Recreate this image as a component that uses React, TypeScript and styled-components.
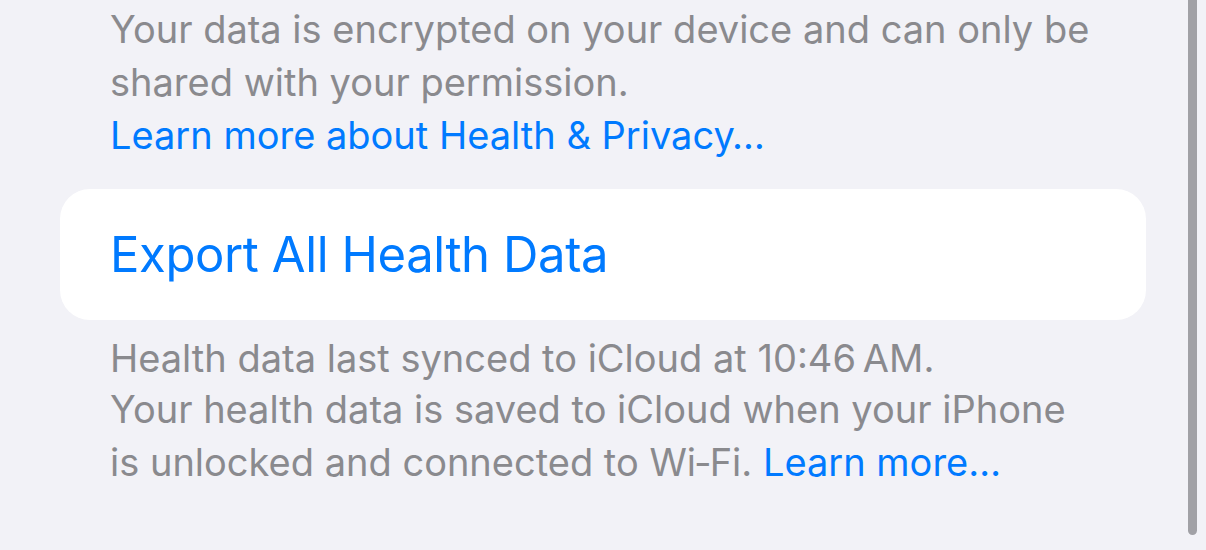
import React from 'react';
import styled, { createGlobalStyle } from 'styled-components';

const COLORS = {
  background: '#f2f2f7',
  card: '#ffffff',
  secondary: '#8a8a8e',
  link: '#007aff',
  scroll: '#a1a1a6',
};

const GlobalStyle = createGlobalStyle`
  html, body {
    margin: 0;
    padding: 0;
    background: ${COLORS.background};
  }
  body {
    font-family: Inter, "Noto Sans", sans-serif;
    -webkit-font-smoothing: antialiased;
  }
`;

const Screen = styled.div`
  position: relative;
  width: 1206px;
  height: 550px;
  overflow: hidden;
  background: ${COLORS.background};
  box-sizing: border-box;
  padding: 3px 60px 0;
`;

const Footer = styled.p<{ $top?: number; $lineHeight?: number }>`
  margin: ${(p) => p.$top ?? 0}px 0 0;
  padding: 0 44px 0 50px;
  font-size: 38px;
  line-height: ${(p) => p.$lineHeight ?? 53}px;
  letter-spacing: 0;
  color: ${COLORS.secondary};
`;

const Link = styled.a`
  color: ${COLORS.link};
  text-decoration: none;
`;

const Card = styled.div`
  margin-top: 27px;
  height: 131px;
  background: ${COLORS.card};
  border-radius: 30px;
  display: flex;
  align-items: center;
  padding: 0 50px;
`;

const CardAction = styled.span`
  font-size: 49px;
  color: ${COLORS.link};
  letter-spacing: -0.4px;
`;

const ScrollThumb = styled.div`
  position: absolute;
  top: -20px;
  right: 9px;
  width: 9px;
  height: 555px;
  border-radius: 5px;
  background: ${COLORS.scroll};
`;

export default function App() {
  return (
    <>
      <GlobalStyle />
      <Screen>
        <Footer>
          Your data is encrypted on your device and can only be shared with your permission.
          <br />
          <Link>Learn more about Health &amp; Privacy…</Link>
        </Footer>
        <Card>
          <CardAction>Export All Health Data</CardAction>
        </Card>
        <Footer $top={13} $lineHeight={50}>
          Health data last synced to iCloud at 10:46&#8239;AM.
        </Footer>
        <Footer>
          Your health data is saved to iCloud when your iPhone is unlocked and connected to Wi‑Fi.{' '}
          <Link>Learn more…</Link>
        </Footer>
        <ScrollThumb />
      </Screen>
    </>
  );
}
